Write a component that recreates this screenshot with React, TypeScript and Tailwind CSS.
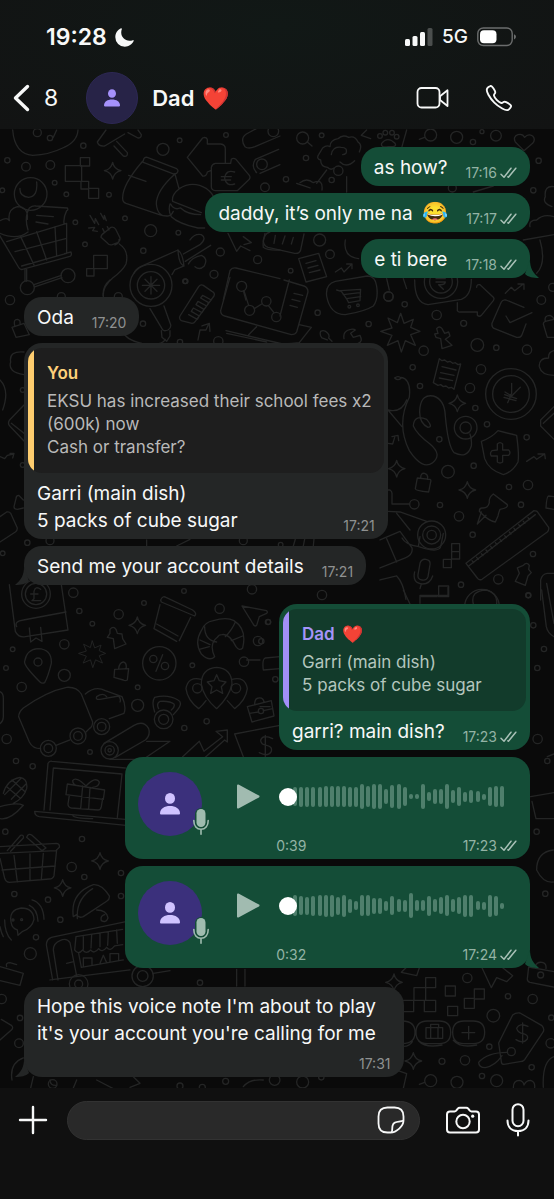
import type { ReactNode } from 'react';
import { IoCallOutline, IoMoon } from 'react-icons/io5';

/* ---------- Wallpaper ---------- */

interface DoodlePatch {
  x: number;
  y: number;
  path: string;
  dots: number[][];
  sparkles?: number[][];
  bursts?: number[][];
}

// Every patch is drawn at three times its size, then scaled down
const PATCHES: DoodlePatch[] = [
  {
    x: 0,
    y: 1,
    path: `M196 107h49v47h-49z M241 83h28v25h-28z M243 154h23v23h-23z M266 175h30v30h-30z M281 376h41v40h-41z M260 416h22v22h-22z
      M38 0q6 72 60 76q50-2 90-22q44-18 46-54 M170 0l-10 22 M318 0l-26 36q4 14 22 12l60-36 M342 48l28 30q14 4 12-10l-32-34 M384 8l30 16q10 0 10-10l-10-14
      M60 175q-2 24 26 27q28-2 24-46 M-5 310l62 104q4 6 10 4l140-38q10-2 6-14l-20 5 M20 335l180-55v90l-135 38 M62 320l40 85 M110 305l30 85 M165 290l5 88 M45 365l155-40
      M75 418v36 M80 418v36 M102 464l82-28 M104 471l82-28 M0 272q22-12 28 0q-6-34 24-42q34 0 30 38 M84 300q-12-40 4-66q10-8 20-6l94 6q4 6-2 8q-10 20-8 38 M110 256l50 4 M108 276l36 6 M0 310q50 22 84-4
      M303 322q0-8 10-14l20-16q10-2 14 6l12 24q4 10-6 16l-16 6q-10 2-14-4z M308 296l6 12 M322 290l5 10 M345 345q14-6 12-16 M358 342q30 20 20 60q-10 20-40 42q-30 26-28 54 M270 256l14 24l2-14l10 18 M302 250l10 18l1-12l6 16 M266 294l18-2l-6 10l14 2
      M430 92q2-12 12-10l88 34q8 6 0 14l-10 2l-94-36z M426 96q-60 70-58 110q0 10 10 14l100 34q10 4 22 4 M525 132l12 44 M525 132q-56 50-56 90q4 40 35 36q10 0 16-14 M386 136l52 18
      M518 214q-4-20 20-38q40-26 82 0q18 14 20 24 M510 222q-6 20 4 38q20 20 80 34h20 M518 214l86 34 M512 222q10 20 30 12q20 20 60 20
      M562 82l46-58q10-4 14 4v14h40q14 2 14 14v44 M562 82l46 56q12 2 14-12l10-4 M634 112q2-10 12-12h46l2-12q6-6 14 0l40 48q4 6 0 12l-36 34h-66q-12-2-12-12z M704 126q-26-8-30 18q4 26 30 18 M664 140h30 M664 150h28
      M735 50q-16-24 4-38l30-16 M735 50q10 8 30 0l75-32 M770 128q-18-18-4-40l70-30 M780 130l60-26 M684 310l26 54l12-16l28 14 M730 320l24 18l-22 6
      M453 440v52 M427 466h52 M435 448l36 36 M471 448l-36 36 M402 430q4-12 20-20l112-50 M516 434l8-14l28-12 M534 360q14 10 18 48q-16-6-18-48 M550 372l50-28q22-20 4-30q-20-4-34 16 M556 394l76-48 M565 402q10-20 40-26q20 10 8 32q-14 14-28 2
      M670 510l20-88q6-10 18-8l132 32 M730 482l8 28 M790 352q-4-40 20-46 M790 352q12 10 50 8`,
    dots: [
      [22, 91, 8], [78, 110, 13], [151, 105, 13], [250, 47, 8], [164, 158, 7], [199, 193, 7], [327, 194, 7], [7, 181, 7],
      [375, 265, 7], [226, 277, 7], [255, 343, 7], [452, 302, 18], [430, 362, 8], [535, 308, 7], [539, 31, 7], [489, 58, 18],
      [678, 15, 7], [795, 172, 13], [661, 366, 12], [773, 389, 12], [642, 433, 12], [557, 454, 7], [112, 8, 12], [150, 24, 8],
      [92, 192, 49], [82, 473, 21], [204, 437, 21], [820, 4, 16], [786, 103, 16], [453, 466, 63], [453, 466, 41],
    ],
    sparkles: [[338, 122]],
  },
  {
    x: 190,
    y: 1,
    path: `M352 36l14 12 M1002 62l-26-26q-8-16 8-22q14-4 20 8q10-12 24-4q10 10 0 22z
      M420 50q0-20 24-24q14-14 32-4q20-6 28 14q14 8 4 30 M420 50q-10-6-22 4l-12 20q-8 12 6 16q0 20 20 22q10 10 20 2 M424 74q4-26 30-22q20 0 14 18q-4 4-10 4 M450 96q20 20 44-4 M410 120l-30 40 M470 140v46 M330 158q20-16 40 0q30-14 26 22 M320 160l40 14
      M575 40q18-22 40 0q8 12-20 10q-24 4-20-10 M530 0l-16 16l28 10 M650 0l-14 50 M704 22l-16 6
      M225 310l-5 24q2 14 14 18l80 18q14 2 18-10l10-48 M256 316l-4 24 M285 318l-8 24 M310 322l-6 20 M466 330q-8 50 40 56
      M326 386l60-16l24 70l-62 16z M348 400l30-8 M354 414l30-8 M358 428l32-8 M436 426l18-12l8 12l22-22 M470 402h16v14
      M1092 170q-30-4-26 30q-10 20 20 30 M1020 290q-4-20 20-20q20-20 52-10 M1000 330l92-16 M1050 330q20 70-10 100 M590 446l8 34 M640 446l10 30 M850 186l60-18`,
    dots: [
      [338, 24, 18], [395, 16, 7], [348, 84, 8], [288, 148, 8], [800, 22, 18], [849, 36, 8], [722, 15, 18], [876, 5, 6],
      [918, 17, 16], [1046, 92, 8], [1030, 181, 8], [787, 174, 12], [389, 330, 18], [420, 373, 13], [302, 422, 7],
      [445, 122, 14], [425, 150, 8], [570, 18, 7], [586, 8, 7], [606, 8, 7], [620, 20, 7],
    ],
  },
  {
    x: 0,
    y: 151,
    path: `M450 86l36 60q4 10 18 4q10-6 8-16l-20-56 M484 152l2 20l14 12l10-16v-16
      M540 108q-4 8 4 14l32 8q6 0 10-6l56-76q4-10-6-14l-26-18q-8-4-14 4z M566 104l26 14l6-10l-24-14l6-10l26 14l6-10l-24-14l6-10l26 14l6-10l-24-14l6-8l26 14
      M690-8l-28 100q0 12 12 16l200 56q12 0 16-8l34-120q0-14-12-18l-60-18 M868 0l-28 108 M732 32l14 44 M763 86l22-14 M806 78l16 20 M882 40l26 6 M876 58l24 6 M870 76l22 6
      M678 152q120 28 170 40q30-2 50-4l36-46l-36-8 M770 140l-24 24 M680 160l120 26 M594 180l6-30h18l8-18 M606 138l22-8l2 24
      M980 48q-4-36 26-44l96-16q24 0 28 30q6 40-10 60q-24 16-84 26q-46 0-56-56 M1010 30l14 4q18 24 22 34l34-6l2-34l-60 4 M1030 44l50-6 M1040 56l42-6
      M1032 176q-4-24 20-28q10-2 14 2l-14 10l8 12l20-6q10 20-6 24 M962 154q10-6 20 4q8 8 4 16l10 10 M962 154q-4 12 4 20l16 6
      M36 142l36-12l16 34l-40 8z M44 136q-4-18 8-18q10 2 8 12 M310 50q-4-30 20-50 M366 150q10 30 60 40q60 10 70-12
      M72 216q-46-4-40 30q-10 30 40 38 M0 300q30 30 8 90 M72 375l-44 46q-6 10 2 18l42 44 M34 430l38 30 M0 530l14 6l8-10l18-4 M30 520h12l-4 14
      M70 660l-14-14q-8 0-8 10l-6 24q0 8 10 8l18-4 M0 710l20-14q8-2 12 4l20 44q0 8-6 12l-46 30 M440 780v18 M530 798l40-20 M880 798l6-20 M910 798l4-20 M940 798l2-20`,
    dots: [
      [30, 60, 14], [184, 50, 12], [355, 50, 12], [429, 131, 8], [953, 98, 8], [1166, 50, 14], [1106, 132, 8], [655, 184, 14],
      [540, 186, 8], [555, 4, 7], [725, 19, 15], [749, 91, 15], [799, 64, 14], [829, 111, 14], [1048, 80, 4], [1074, 76, 4],
      [68, 555, 7], [68, 330, 7], [82, 788, 8], [8, 820, 7], [150, 782, 12], [730, 782, 12], [842, 794, 7],
    ],
  },
  {
    x: 380,
    y: 151,
    path: `M170 146q8-10 16 0l8 14l12-4l4 12l-14 10l20 18l-30 10l-4-30l-14-4l-4-10l10-2z M104 0q0 70 40 74l100-16q30-10 30-60 M232 68v24q4 6 10 4h50v10q6 6 12 0l36-44q4-6 0-10l-40-38q-10-2-10 8 M168-4h28 M168 6h28q-2 10-20 8l14 14
      M376 40l18-18l10 10l26-20 M414 12h18v16 M432 82l-54-22q-10-2-14 6l-28 64q-2 12 8 16l66 26q12 2 16-8l12-32 M378 108l12 20l66-30
      M490 132q0-6 6-8l26-6 M490 132l12 40h20 M496 124q-4-18 14-18q10 4 12 12 M522 212q-18 4-16 22q-30 0-28 26q6 26 44 26
      M178 236l8 6l8-2l8 6l8-2l8 6l8-2l8 6l8-2l-20 76l-8-6l-8 2l-8-6l-8 2l-8-6l-8 2l-14-8z M186 260l42 10 M182 278l40 8 M178 294l40 8
      M44 294q10-8 20 0q-10 10-20 0 M64 292q30 6 24 60q-40 80 0 160q40 60 70 36q30-24-8-56q-40-30-50-54q2-36 40-20q20 24 4 24q-30-14-24-60q6-40 40-34q34 10 36 60q8 90 26 110q40 20 52-20q2-20-4-36
      M24 390q40 10 56-30 M24 390l42 50 M24 490l14 2l6-20 M36 470l18-4l2 16 M395 310v30l-12 28 M375 336l20 12l26-26 M374 344l36 12 M372 352l36 10
      M304 484q30-10 50-32q30 8 56 14q8 60 4 80q-16 30-44 38q-44-14-56-48z M352 492q8-8 16 0v18h18q8 8 0 16h-18v20q-8 6-16 0v-18h-18q-6-8 2-16l16-2z
      M440 544l22-14l8 8l24-16 M474 522h20l2 14 M24 630h6q6 4 6 10v32h52 M112 594l38 4q4 2 2 8l-6 30q-40-4-40-10z M122 594q0-16 12-14q12 4 8 18
      M340 642l42 32q4 10-22 14q-4 10-6 20l-8 18q-20-2-48-32q0-10 8-10q18 2 22-16q-2-16 12-26z M318 706l-26 26l12-36
      M258 850l204-158q10 0 12 6l32 44q2 8-4 14l-196 142q-10 4-14-4l-34-44z M266 858l200-154 M276 842l5 6 M290 832l5 6 M304 821l5 6 M318 810l5 6 M332 799l5 6 M346 788l5 6 M360 778l5 6 M374 767l5 6 M388 756l5 6 M402 745l5 6 M416 734l5 6 M430 724l5 6 M444 713l5 6
      M24 694l36 2l80 28 M50 700l40 50 M66 774q10 20 50 26q60 20 66 0l8-40 M0 780l60-26l36 50q4 20-20 30l-76 30 M20 776l30 70 M115 800l5-30
      M215 791h24v24h-24z M215 815h24v22h-24z M190 838h24v25h-24z M176 918h30v32h-30z M122 950h50
      M120 850q4-14 18-12q14 2 12 16l-6 36q-4 12-18 10q-14-2-12-16z M104 876q-8 34 24 36q22 0 30-24 M124 912l-4 14 M430 856q10-12 18 0l-2 12l8 10l-10 10l-8 28l-30-12l12-24l-6-16z
      M522 650l-16-2q-6 0-8 36l24 4 M482 960v-60q4-18 20-20h20 M522 380l-40 40v18l40 40 M490 430l32-30 M0 900l50-12q20 20 28 70`,
    dots: [
      [25, 49, 14], [74, 73, 8], [170, 105, 14], [251, 130, 9], [484, 60, 13], [292, 195, 19], [349, 203, 8], [441, 209, 14],
      [131, 212, 14], [98, 262, 8], [303, 268, 14], [270, 324, 14], [120, 318, 8], [286, 384, 8], [321, 433, 8], [440, 472, 8],
      [178, 478, 8], [204, 575, 19], [281, 557, 8], [387, 621, 8], [444, 615, 14], [103, 673, 14], [180, 675, 8], [237, 709, 14],
      [278, 764, 8], [423, 674, 8], [459, 822, 8], [355, 898, 14], [243, 914, 8], [445, 946, 8], [518, 22, 12], [183, 5, 50],
      [183, 5, 34], [257, 443, 34], [257, 443, 17], [393, 342, 76], [393, 342, 55], [155, 765, 42], [155, 765, 27], [155, 765, 14],
      [306, 980, 52],
    ],
    sparkles: [[232, 370], [50, 566], [262, 630]],
    bursts: [[62, 158, 58]],
  },
  {
    x: 0,
    y: 451,
    path: `M28 14l18 140q10 20 30 16l128-20l-20-136 M50 140q-8-16 20-20l128-24 M122 28q-16-12-20 6v22l-6 6h26 M92 42h22 M88 144l4 42l16-12l18 10l-4-42
      M482 60q6-14 16-8l80 38q14 10 6 18l-100-42z M480 74l-18 72 M572 112l-34 70 M462 146l68 38 M470 132l64 36
      M640 122q40-12 62 0q40 26 26 82q-10 10-20-4q-20-40-42-36q-10 0-14 8q-26 20-8 58q-16 16-40-8q-22-34 0-70q10-26 36-30 M614 140q0 40 36 46 M600 180l30 14 M676 170q20-20 30-44 M694 182l34-14 M598 208l30-8
      M726 78l74 14q4 4 0 8l-22 10l-8 26q-4 4-8 0z M114 206q42 2 40 44q-10 40-20 58q-8 4-14-2q-50-50-46-62q6-36 40-38z
      M330 148q10-12 18 0l4 12l14 2l2 14l10 16l-34 14l-4-30l-18-4l8-12z M344 268l42-2l-4 34q-6 4-12 0l-28-8z M356 266q2-18 14-20q12 4 8 20 M488 224l-20 50
      M650 262q46 4 46 50q-8 40-46 74q-40-34-46-74q0-46 46-50z M650 284l8 18l20 4l-14 14l4 20l-18-10l-18 10l4-20l-14-14l20-4z M604 298q-40-10-46 28q4 34 38 60q12-10 22-24 M696 298q40-10 46 28q-4 34-38 60l-22-24
      M742 380l72-18l8 46l-66 18z M764 374q0-20 12-20q14-2 16 12 M748 400l28-4 M790 392l28-6 M840 230l-44 4q-10 4-6 36l50-4
      M56 410q0-14 14-26q70-50 130-62q30-2 44 20l34 84q0 14-10 20l-10 10 M210 480l-42 16 M56 410l32 76q10 20 34 20 M256 342q30-26 60-10l50 18q14 30 6 50l-44 16 M290 350q-4 10 10 8l56-10q8 10 4 18 M290 350q20-14 30 0
      M464 396q-10-30 0-44q40-10 70 8q20 10-14 44 M476 386q-8-16 4-22q30-2 42 8q4 8-8 18 M312 490l90-54q30-16 44 10q6 20-10 34l-90 52 M330 538h100l80-54h-70
      M548 530l50-46l14 30l56-44l-20-16l34-4v36l-8-6l-58 52 M704 462l136-26 M704 462l26 68 M818 476q-28-14-36 4q0 14 18 16q18 4 14 18q-10 18-36 4 M796 466v64 M0 335q10 4 10 20v56q0 12-10 20
      M132 690l12-140q4-8 12-6l220 20 M150 690l10-126l206 18l-14 130 M104 694q0 14 14 16l260 26 M104 694l272 24 M218 706q4 10 60 10
      M202 612l112 18l-4 28l-112-14z M208 646l-4 26q0 10 10 12l80 6q8 0 10-10l4-24 M248 618l-6 68 M270 622l-4 66 M258 618q-30-30-40-16q0 14 20 16 M258 618q30-30 40-12q0 14-20 16
      M10 640q10-40 50-48q24 4 20 34q-10 30-40 44 M20 620l40 34 M36 600l40 36 M0 716q30 6 70-40q-20-10-70 4 M64 594l-50 50 M78 612l-44 46
      M0 800l170-10q10 2 8 12l-10 10l-168 8 M0 835l14 60q4 12 14 12l120-10q10 0 14-10l8-78 M42 826l10 80 M90 822v80 M130 820l-6 78 M6 870l160-12 M22 812l40-46q10-2 8 8l-38 40 M80 772q6-14 16-6l42 38l-12 8z
      M34 1030q-10-40 30-46q36 0 38 34q-6 26-34 36l-14 12l-2-16q-16-6-18-20z M96 960q34 10 36 58 M88 976q24 10 26 48 M14 1020q0 40 20 60 M0 1040q4 20 10 30
      M220 1010q-10-70 60-96q26-2 48 34q2 10-8 16l-70 46q-14 6-20-6z M232 1016q-4-60 46-90 M290 990q30 0 34 24q-6 16-20 8q-4-14 10-18
      M140 1100q-4-20 14-28l220-46 M140 1100l18 100 M160 1110q0-20 20-28q20-10 30 6l20 100 M160 1110l14 90 M228 1070l140-22 M228 1070l-4 40q10 16 24 0q10 14 24 0q10 14 24-4q10 14 24-4q10 14 24-4l24-4 M250 1068v40 M275 1064l-2 40 M300 1060v40 M325 1056l-2 40 M350 1050l2 40
      M236 1120l8 42l126-22 M250 1158v-24h26v20 M300 1150l10-24l10 22 M330 1145v-24h26v20 M200 1150l18-4 M0 1160l70 20l-10 36l-60-14 M20 1160q-4-12 10-12l20 6 M150 1200l240-30 M460 1180l50-8 M710 1168v50 M735 1168v50`,
    dots: [
      [220, 38, 14], [238, 93, 8], [356, 103, 14], [432, 69, 7], [552, 33, 7], [277, 131, 7], [38, 208, 7], [18, 264, 7],
      [193, 193, 14], [193, 286, 18], [65, 321, 14], [577, 256, 7], [774, 183, 14], [659, 86, 14], [805, 126, 7], [732, 245, 14],
      [413, 322, 7], [413, 376, 18], [553, 444, 8], [620, 424, 8], [20, 477, 14], [270, 516, 7], [48, 543, 8], [98, 559, 8],
      [16, 755, 8], [246, 777, 8], [215, 861, 14], [253, 891, 8], [363, 879, 8], [363, 948, 8], [144, 959, 8], [43, 942, 8],
      [181, 1019, 8], [108, 1072, 8], [91, 1121, 18], [756, 28, 14], [826, 298, 8], [108, 42, 43], [108, 42, 32], [114, 246, 12],
      [478, 250, 50], [460, 237, 11], [495, 258, 11], [592, 325, 14], [708, 325, 14], [783, 393, 8], [145, 505, 24], [145, 505, 13],
      [234, 468, 24], [234, 468, 13], [305, 440, 24], [305, 440, 13], [491, 418, 28], [491, 418, 15], [329, 511, 26], [329, 511, 14],
      [329, 511, 5], [39, 1020, 3], [65, 1019, 3], [428, 1188, 32], [428, 1188, 16], [236, 1212, 28], [236, 1212, 12],
      [5, 1257, 14], [60, 1314, 8], [57, 1390, 13], [600, 1208, 8],
    ],
    sparkles: [[412, 136], [300, 843], [188, 924]],
    bursts: [[277, 223, 40]],
  },
  {
    x: 390,
    y: 826,
    path: `M72 98h35v38h-35z M107 68h30v30h-30z M103 136h34v34h-34z M37 136h34v34h-34z M166 93h30v30h-30z M173 154h30v28h-30z M223 130h30v30h-30z M253 102h30v30h-30z
      M48 38l-14 14l46 10l8-24 M276 38l28 60l16-30l30 12l18-18l-30-24 M416 36l76 14 M416 36l-4 36q0 8 8 10l70 14 M436 34q4-14 20-12q14 2 12 18
      M112 198h36q34 0 34 34q0 34-34 34h-36q-34 0-34-34q0-34 34-34z M222 198h28q34 0 34 34q0 34-34 34h-28q-34 0-34-34q0-34 34-34z M37 198q38 0 38 34q0 34-38 34 M86 258q20 22 70 12 M190 256q20 24 70 14 M37 274q20 2 30-14
      M236 214v38 M216 233h38 M108 218h50v32h-50z M122 218v-10h24v10 M122 218v32 M144 218v32
      M326 264l42-84q10-8 22-6l66 38q8 8 4 18l-56 84q-6 6-14 6l-48 8q-8 0-8-8z M414 214q-26-12-34 6q4 14 20 16q16 4 12 16q-12 16-34 2 M398 204v60 M352 292q-60 0-86 30q0 16 20 16q30-6 50-36
      M370 398q0-22 18-22q12 2 14 14q6-14 20-14q14 4 12 22 M492 305q-36 14-32 92 M26 348l24 8l-10 44 M104 382l-16 6`,
    dots: [
      [232, 69, 14], [354, 124, 8], [428, 132, 14], [310, 182, 19], [298, 275, 8], [225, 316, 14], [156, 319, 9], [425, 337, 8],
      [276, 363, 8], [484, 188, 8], [482, 265, 14], [122, 377, 18], [201, 382, 18], [320, 377, 18], [452, 60, 9], [364, 290, 12],
    ],
    sparkles: [[70, 318], [12, 82]],
  },
  {
    x: 260,
    y: 461,
    path: `M480 40v-24h84v-24 M640 42q-10-40 40-42q34 10 30 42 M860-20l22 120 M845 0l14 110q4 20 23 30 M0 210h-40 M862 500l20-8 M812 620l70-12 M816 634l12 52h60 M880 780q-50 6-50 60q20 40 50 36 M0 350h30 M430 0l20 42`,
    dots: [[805, 16, 7], [852, 177, 8], [832, 234, 8], [833, 447, 14], [862, 513, 8], [830, 725, 8], [856, 911, 8], [186, 15, 14], [24, 96, 8], [4, 154, 8], [820, 106, 8]],
  },
  {
    x: 0,
    y: 841,
    path: `M0 210l34-30q8-6 0-14l-30-18 M36 330q-8-50 34-66 M100 320l-8 34 M290 330l50 26 M400 320l20 20l-30 12 M150 330q0 18 20 16 M730 350q20-24 60-20 M230 330l-10 24`,
    dots: [[540, 348, 9], [607, 352, 9], [677, 334, 9], [908, 336, 18], [964, 322, 8], [824, 330, 16], [158, 342, 13]],
  },
];

function Wallpaper() {
  return (
    <svg
      aria-hidden="true"
      viewBox="0 0 554 959"
      preserveAspectRatio="xMidYMin slice"
      className="pointer-events-none absolute inset-0 h-full w-full"
    >
      <g fill="none" stroke="#242525" strokeWidth={4} strokeLinejoin="round" strokeLinecap="round">
        {PATCHES.map((patch, i) => (
          <g key={i} transform={`translate(${patch.x} ${patch.y}) scale(0.3333)`}>
            <path d={patch.path} />
            {patch.dots.map(([cx, cy, r], j) => (
              <circle key={j} cx={cx} cy={cy} r={r} />
            ))}
            {patch.sparkles?.map(([x, y], j) => (
              <path
                key={j}
                transform={`translate(${x} ${y})`}
                d="M0-25q4 20 25 25q-20 4-25 25q-4-20-25-25q20-4 25-25z"
              />
            ))}
            {patch.bursts?.map(([x, y, size], j) => (
              <path
                key={j}
                transform={`translate(${x} ${y}) scale(${size / 58})`}
                d="M0-58l10 30l28-12l-8 24l28 12l-28 10l14 32l-30-14l-12 34l-10-34l-32 14l14-30l-34-12l34-10l-12-30l28 14z"
              />
            ))}
          </g>
        ))}
      </g>
    </svg>
  );
}

/* ---------- Icons ---------- */

function PersonIcon({ className }: { className: string }) {
  return (
    <svg viewBox="0 0 20 22" className={className} fill="currentColor" aria-hidden="true">
      <ellipse cx="10" cy="5.4" rx="5" ry="5.4" />
      <path d="M0 20.5C0 15.5 4.5 13 10 13s10 2.5 10 7.5q0 1-1 1H1q-1 0-1-1z" />
    </svg>
  );
}

function Ticks() {
  return (
    <svg
      viewBox="0 0 17 12"
      className="h-3 w-[17px] text-[#a9c1b7]"
      fill="none"
      stroke="currentColor"
      strokeWidth="1.5"
      strokeLinecap="round"
      strokeLinejoin="round"
      aria-label="Delivered"
    >
      <path d="M1 7.200l3 3L11 1.200M7.800 9.800l.6.400L15.800 1.200" />
    </svg>
  );
}

function SmallMic() {
  return (
    <svg viewBox="0 0 18 28" className="h-7 w-[18px]" fill="none" aria-hidden="true">
      <rect x="3" y="0" width="12" height="21" rx="6" fill="#144d37" />
      <rect x="4.5" y="1" width="9" height="18" rx="4.5" fill="#9fbcaf" />
      <path d="M1.800 12.500c0 5.500 3 8.700 7.200 8.700s7.200-3.200 7.200-8.700M9 21.500v4.800" stroke="#9fbcaf" strokeWidth="1.6" strokeLinecap="round" />
    </svg>
  );
}

/* ---------- Bubbles ---------- */

type Side = 'in' | 'out';

function Tail({ side }: { side: Side }) {
  if (side === 'out') {
    return (
      <svg viewBox="0 0 20 18" className="absolute -right-[9px] bottom-0 h-[18px] w-5" fill="#144d37" aria-hidden="true">
        <path d="M11 0c0 8 3 13 9 18-6 0-11-1-14-4z" />
      </svg>
    );
  }
  return (
    <svg viewBox="0 0 20 18" className="absolute -left-[9px] bottom-0 h-[18px] w-5" fill="#242626" aria-hidden="true">
      <path d="M9 0c0 8-3 13-9 18 6 0 11-1 14-4z" />
    </svg>
  );
}

function Stamp({ time, side }: { time: string; side: Side }) {
  return (
    <span
      className={`flex shrink-0 items-center gap-[3px] text-sm leading-[14px] ${
        side === 'out' ? 'text-[#93b3a5]' : 'text-[#8f9191]'
      }`}
    >
      <time>{time}</time>
      {side === 'out' && <Ticks />}
    </span>
  );
}

interface BubbleProps {
  side: Side;
  tail?: boolean;
  className?: string;
  children: ReactNode;
}

function Bubble({ side, tail, className = '', children }: BubbleProps) {
  return (
    <div
      className={`relative rounded-[18px] ${
        side === 'out' ? 'self-end bg-[#144d37]' : 'self-start bg-[#242626]'
      } ${className}`}
    >
      {tail && <Tail side={side} />}
      {children}
    </div>
  );
}

interface TextMessageProps {
  side: Side;
  time: string;
  tail?: boolean;
  className?: string;
  quote?: ReactNode;
  children: ReactNode;
}

function TextMessage({ side, time, tail, className, quote, children }: TextMessageProps) {
  return (
    <Bubble side={side} tail={tail} className={className}>
      {quote}
      <div className="flex items-end justify-between gap-[18px] px-[13px] pt-[7px] pb-[5px]">
        <p className="text-[19px] leading-[27px]">{children}</p>
        <div className="pb-px">
          <Stamp time={time} side={side} />
        </div>
      </div>
    </Bubble>
  );
}

function Quote({ side, author, children }: { side: Side; author: ReactNode; children: ReactNode }) {
  const out = side === 'out';
  return (
    <div className="px-1 pt-[5px]">
      <blockquote className={`overflow-hidden rounded-[14px] ${out ? 'bg-[#123b2b]' : 'bg-[#1e1e1e]'}`}>
        <div
          className={`border-l-6 pt-[14px] pr-3 pb-[14px] pl-[13px] text-[17px] leading-[23px] ${
            out ? 'border-[#a28ff8] text-[#b4c6be]' : 'border-[#fecd6f] text-[#b9b9b9]'
          }`}
        >
          <p className={`mb-[5px] flex gap-2 font-semibold ${out ? 'text-[#a594f9]' : 'text-[#fed07a]'}`}>{author}</p>
          {children}
        </div>
      </blockquote>
    </div>
  );
}

interface VoiceMessageProps {
  duration: string;
  time: string;
  levels: number[];
  tail?: boolean;
}

function VoiceMessage({ duration, time, levels, tail }: VoiceMessageProps) {
  return (
    <Bubble side="out" tail={tail} className="flex w-4/5 pt-[15px] pr-[13px] pb-1.5 pl-[13px]">
      <div className="relative flex h-16 w-16 shrink-0 items-center justify-center rounded-full bg-[#3b307c]">
        <PersonIcon className="h-[22px] w-5 text-[#d0c3ff]" />
        <span className="absolute -right-2 bottom-0">
          <SmallMic />
        </span>
      </div>
      <button type="button" aria-label="Play voice message" className="mt-3 ml-[35px] h-[25px] w-[23px] shrink-0 text-[#a1bbb0]">
        <svg viewBox="0 0 23 25" fill="currentColor" stroke="currentColor" strokeWidth="2" strokeLinejoin="round">
          <path d="M1 1.500L21.500 12.500L1 23.500z" />
        </svg>
      </button>
      <div className="ml-4 flex min-w-0 flex-1 flex-col justify-between">
        <div className="relative mt-3 mr-[13px] ml-[3px] h-[25px]">
          <div className="flex h-full items-center justify-between pl-[14px]">
            {levels.map((level, i) => (
              <span key={i} className="w-1 rounded-full bg-[#4f7f6c]" style={{ height: level }} />
            ))}
          </div>
          <input
            type="range"
            aria-label="Voice message position"
            min={0}
            max={100}
            defaultValue={0}
            className="absolute inset-0 h-full w-full appearance-none bg-transparent [&::-webkit-slider-thumb]:h-[18px] [&::-webkit-slider-thumb]:w-[18px] [&::-webkit-slider-thumb]:appearance-none [&::-webkit-slider-thumb]:rounded-full [&::-webkit-slider-thumb]:bg-white"
          />
        </div>
        <div className="mt-[30px] flex items-end justify-between">
          <span className="text-sm leading-[14px] text-[#93b3a5]">{duration}</span>
          <Stamp time={time} side="out" />
        </div>
      </div>
    </Bubble>
  );
}

/* ---------- Bars ---------- */

function StatusBar() {
  return (
    <div className="flex h-[74px] items-center justify-between pr-[37px] pl-[46px]">
      <div className="flex items-center gap-[7px]">
        <time className="text-[23px] font-semibold">19:28</time>
        <IoMoon className="h-[21px] w-[21px]" />
      </div>
      <div className="flex items-center">
        <svg viewBox="0 0 28 18" className="h-[18px] w-7" fill="currentColor" aria-label="Signal">
          <rect x="0" y="11" width="5" height="7" rx="1.5" />
          <rect x="7.5" y="8" width="5" height="10" rx="1.5" />
          <rect x="15" y="4" width="5" height="14" rx="1.5" />
          <rect x="22.5" y="0" width="5" height="18" rx="1.5" opacity=".25" />
        </svg>
        <span className="ml-[9px] text-[19px] font-medium">5G</span>
        <svg viewBox="0 0 40 20" className="ml-[9px] h-5 w-10" fill="none" aria-label="Battery">
          <rect x=".8" y="1" width="34.4" height="17.5" rx="5.5" stroke="#6b6d6d" strokeWidth="1.4" />
          <rect x="3" y="3.2" width="16.5" height="13" rx="4" fill="#fff" />
          <path d="M37 7.200q2 .8 2 2.600t-2 2.600z" fill="#6b6d6d" />
        </svg>
      </div>
    </div>
  );
}

function ChatHeader() {
  return (
    <div className="flex h-[52px] -mt-0.5 items-center pr-10 pl-[13px]">
      <button type="button" aria-label="Back, 8 unread chats" className="flex items-center gap-[14px] text-[23px]">
        <svg viewBox="0 0 17 28" className="h-7 w-[17px]" fill="none" stroke="currentColor" strokeWidth="3.4" strokeLinecap="round" strokeLinejoin="round">
          <path d="M14.500 2.500L2.500 14l12 11.500" />
        </svg>
        8
      </button>
      <div className="ml-7 flex h-[52px] w-[52px] shrink-0 items-center justify-center rounded-full border border-[#2d2854] bg-[#272347]">
        <PersonIcon className="h-[18px] w-4 text-[#a591fb]" />
      </div>
      <h1 className="ml-[14px] flex flex-1 gap-2 text-[22px] font-semibold">
        <span>Dad</span>
        <span>❤️</span>
      </h1>
      <button type="button" aria-label="Video call">
        <svg viewBox="0 0 34 24" className="h-6 w-[34px]" fill="none" stroke="currentColor" strokeWidth="1.8" strokeLinejoin="round">
          <rect x="1.5" y="2" width="22" height="19.5" rx="4" />
          <path d="M24 10.200L31.500 4.200V20L24 14z" />
        </svg>
      </button>
      <button type="button" aria-label="Voice call" className="ml-[34px]">
        <IoCallOutline className="h-[30px] w-[30px]" />
      </button>
    </div>
  );
}

function Composer() {
  return (
    <form className="flex h-[111px] items-start bg-[#101010] pt-[13px] pr-6 pl-[18px]">
      <button type="button" aria-label="Attach" className="flex h-[38px] items-center">
        <svg viewBox="0 0 30 30" className="h-[30px] w-[30px]" fill="none" stroke="currentColor" strokeWidth="2.4" strokeLinecap="round">
          <path d="M15 2v26M2 15h26" />
        </svg>
      </button>
      <div className="relative ml-[19px] min-w-0 flex-1">
        <input
          type="text"
          aria-label="Message"
          className="block h-[39px] w-full rounded-full border border-[#323232] bg-[#292929] pr-12 pl-4 text-xl outline-none"
        />
        <button type="button" aria-label="Stickers" className="absolute top-[5px] right-[15px]">
          <svg viewBox="0 0 28 28" className="h-7 w-7" fill="none" stroke="currentColor" strokeWidth="1.8" strokeLinejoin="round">
            <path d="M26.500 14.500V10.500C26.500 4.500 23.500 1.500 17.500 1.500H10.500C4.500 1.500 1.500 4.500 1.500 10.500V17.500C1.500 23.500 4.500 26.500 10.500 26.500H13.500C19.500 26.500 26.500 20 26.500 14.500z" />
            <path d="M14.500 26.500C16 24.500 14.500 21 16 18.500C18 14.500 23 16.500 26.500 14.500" />
          </svg>
        </button>
      </div>
      <button type="button" aria-label="Camera" className="ml-[26px] flex h-[38px] items-center">
        <svg viewBox="0 0 34 28" className="h-7 w-[34px]" fill="none" stroke="currentColor" strokeWidth="2" strokeLinejoin="round">
          <path d="M4 5.500h4.500q1 0 1.700-.8l1.600-2q.7-.9 1.900-.9h6.600q1.200 0 1.900.9l1.600 2q.7.8 1.700.8H30q3 0 3 3v15q0 3-3 3H4q-3 0-3-3v-15q0-3 3-3z" />
          <circle cx="17" cy="15.5" r="6.7" />
          <circle cx="26.7" cy="10.2" r="1.6" fill="currentColor" stroke="none" />
        </svg>
      </button>
      <button type="button" aria-label="Record voice message" className="ml-[26px] flex h-[38px] items-center">
        <svg viewBox="0 0 24 34" className="h-[34px] w-6" fill="none" stroke="currentColor" strokeWidth="2" strokeLinecap="round">
          <rect x="6.5" y="1.2" width="11" height="22" rx="5.5" />
          <path d="M1.500 17.500c0 6.500 4 10.500 10.500 10.500s10.500-4 10.500-10.500M12 28v4.500" />
        </svg>
      </button>
    </form>
  );
}

const FIRST_LEVELS = [
  19, 20, 20, 20, 20, 21, 21, 21, 21, 20, 20, 25, 21, 25, 25, 15, 23, 25, 19, 5, 5, 25, 9, 15, 15, 25, 13, 19, 10, 13, 11, 6,
  19, 21, 21,
];

const SECOND_LEVELS = [
  21, 19, 18, 20, 21, 22, 22, 18, 22, 14, 9, 21, 21, 16, 16, 10, 19, 13, 12, 25, 11, 11, 20, 13, 17, 21, 13, 17, 22, 22, 9, 8,
  22, 20, 6,
];

export default function App() {
  return (
    <div className="flex min-h-screen flex-col bg-[#0a0a0a] font-['Inter','Noto_Color_Emoji',sans-serif] text-[#f7f8f8]">
      <header className="bg-radial-[at_50%_20%] from-[#111816] to-[#121313] pb-[5px]">
        <StatusBar />
        <ChatHeader />
      </header>

      <main className="relative flex-1 overflow-hidden">
        <Wallpaper />
        <div className="relative flex flex-col gap-[19px] px-6 pt-[18px] pb-[11px]">
          <section className="flex flex-col gap-[7px]">
            <TextMessage side="out" time="17:16">
              as how?
            </TextMessage>
            <TextMessage side="out" time="17:17">
              daddy, it’s only me na <span className="ml-1 text-[21px] leading-none">😂</span>
            </TextMessage>
            <TextMessage side="out" time="17:18" tail>
              e ti bere
            </TextMessage>
          </section>

          <section className="flex flex-col gap-[7px]">
            <TextMessage side="in" time="17:20">
              Oda
            </TextMessage>
            <TextMessage
              side="in"
              time="17:21"
              quote={
                <Quote side="in" author="You">
                  <p>
                    EKSU has increased their school fees x2
                    <br />
                    (600k) now
                  </p>
                  <p>Cash or transfer?</p>
                </Quote>
              }
            >
              Garri (main dish)
              <br />5 packs of cube sugar
            </TextMessage>
            <TextMessage side="in" time="17:21" tail>
              Send me your account details
            </TextMessage>
          </section>

          <section className="flex flex-col gap-[7px]">
            <TextMessage
              side="out"
              time="17:23"
              quote={
                <Quote
                  side="out"
                  author={
                    <>
                      <span>Dad</span>
                      <span>❤️</span>
                    </>
                  }
                >
                  <p>Garri (main dish)</p>
                  <p>5 packs of cube sugar</p>
                </Quote>
              }
            >
              garri? main dish?
            </TextMessage>
            <VoiceMessage duration="0:39" time="17:23" levels={FIRST_LEVELS} />
            <VoiceMessage duration="0:32" time="17:24" levels={SECOND_LEVELS} tail />
          </section>

          <Bubble side="in" tail className="flex max-w-3/4 flex-col px-[13px] py-1.5">
            <p className="text-[19px] leading-[27px]">
              Hope this voice note I'm about to play it's your account you're calling for me
            </p>
            <div className="mt-[10px] flex justify-end">
              <Stamp time="17:31" side="in" />
            </div>
          </Bubble>
        </div>
      </main>

      <footer>
        <Composer />
      </footer>
    </div>
  );
}
